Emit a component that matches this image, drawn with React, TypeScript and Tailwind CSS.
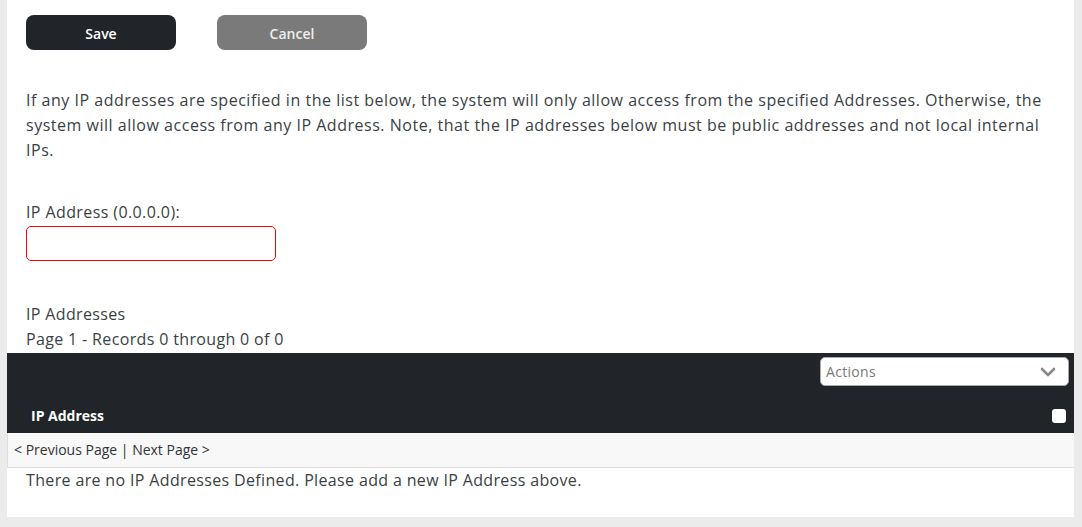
import React from "react";

export default function App() {
  return (
    <div className="min-h-[527px] w-full bg-[#ebebeb] pl-[7px] pr-[8px] pb-[10px] text-[#333]" style={{ fontFamily: '"Open Sans", sans-serif' }}>
      <div className="bg-white pb-[24px]">
        <div className="flex gap-[41px] px-[19px] pt-[15px]">
          <button className="h-[35px] w-[150px] rounded-[8px] bg-[#212529] pt-[2px] text-[14px] font-semibold text-white">Save</button>
          <button className="h-[35px] w-[150px] rounded-[8px] bg-[#7a7a7a] pt-[2px] text-[14px] font-semibold text-[#eeeeee]">Cancel</button>
        </div>
        <p className="mt-[38px] px-[19px] text-[16px] leading-[25px] tracking-[0.52px] text-[#3a3f44]">
          If any IP addresses are specified in the list below, the system will only allow access from the specified Addresses. Otherwise, the system will allow access from any IP Address. Note, that the IP addresses below must be public addresses and not local internal IPs.
        </p>
        <div className="mt-[37px] px-[19px]">
          <label className="block text-[16px] leading-[25px] tracking-[0.4px] text-[#3a3f44]">IP Address (0.0.0.0):</label>
          <input className="mt-[1px] block h-[35px] w-[250px] rounded-[5px] border border-[#ff0000] bg-white outline-none" />
        </div>
        <div className="mt-[41px] px-[19px] text-[16px] leading-[25px] tracking-[0.35px] text-[#3a3f44]">
          <div>IP Addresses</div>
          <div>Page 1 - Records 0 through 0 of 0</div>
        </div>
        <div className="mt-[1px] bg-[#212529]">
          <div className="flex justify-end pt-[4px] pr-[5px]">
            <div className="flex h-[29px] w-[249px] items-center justify-between rounded-[5px] border border-[#aaa] bg-white pl-[5px] pr-[12px]">
              <span className="text-[14px] tracking-[0.3px] text-[#777]">Actions</span>
              <svg width="16" height="10" viewBox="0 0 16 10" fill="none">
                <path d="M2 2l6 6 6-6" stroke="#888" strokeWidth="2.6" strokeLinecap="round" strokeLinejoin="round" />
              </svg>
            </div>
          </div>
          <div className="flex items-center justify-between pl-[24px] pr-[8px] pt-[19px] pb-[7px]">
            <span className="text-[14px] font-bold text-white">IP Address</span>
            <span className="block h-[14px] w-[14px] rounded-[3px] bg-white" />
          </div>
        </div>
        <div className="border-b border-l border-[#dddddd] bg-[#f8f8f8] px-[6px] py-[7px] text-[14px] leading-[20px] text-[#333]">
          <span>&lt; </span>
          <a className="text-[#333]">Previous Page</a>
          <span> | </span>
          <a className="text-[#333]">Next Page</a>
          <span> &gt;</span>
        </div>
        <div className="px-[19px] text-[16px] leading-[25px] tracking-[0.35px] text-[#3a3f44]">
          There are no IP Addresses Defined. Please add a new IP Address above.
        </div>
      </div>
    </div>
  );
}
